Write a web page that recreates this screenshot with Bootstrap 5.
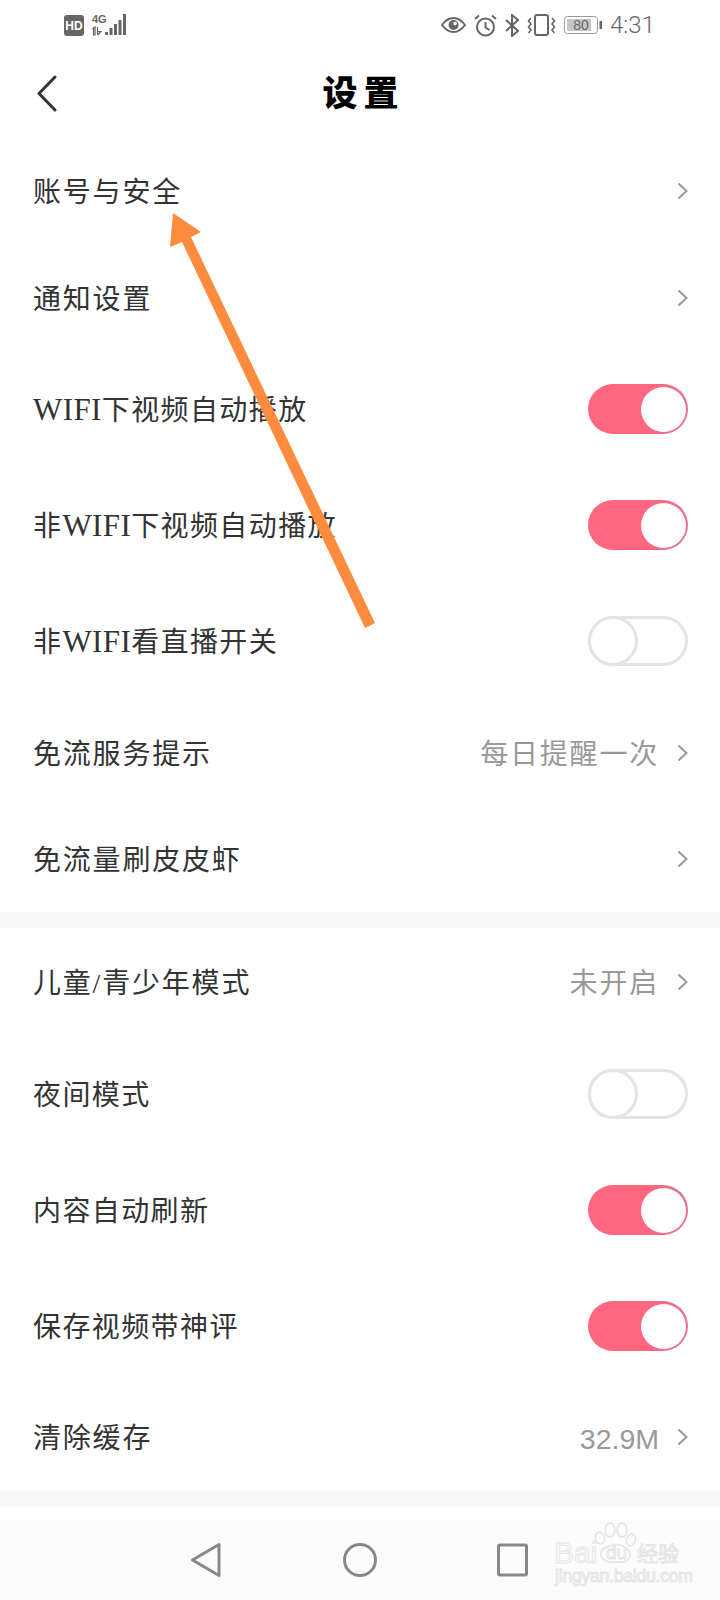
<!DOCTYPE html>
<html lang="zh-CN">
<head>
    <meta charset="UTF-8">
    <meta name="viewport" content="width=device-width, initial-scale=1.0">
    <title>设置</title>
    <link href="https://cdn.jsdelivr.net/npm/bootstrap@5.3.0/dist/css/bootstrap.min.css" rel="stylesheet">
    <style>
        body {
            width: 720px;
            height: 1600px;
            overflow: hidden;
            background: #fff;
            font-family: "Liberation Serif", "Noto Sans CJK SC", serif;
            color: #333;
        }
        .phone { position: relative; width: 720px; height: 1600px; }
        .status-bar { height: 50px; padding: 0 65px 0 64px; color: #666; }
        .status-time { font: 300 24px/1 "Roboto", sans-serif; margin-left: 8px; }
        .title-bar { height: 87px; padding-left: 36px; position: relative; }
        .page-title { position: absolute; left: 0; right: 0; top: 18px; margin: 0; padding-left: 7px; text-align: center; font: 900 35px/46px "Noto Sans CJK SC", sans-serif; letter-spacing: 6px; color: #000; }
        .set-row { height: 107px; padding: 0 32px 0 33px; font-size: 28px; letter-spacing: 1.8px; }
        .set-row > span:not(.switch-box) { padding-top: 4px; }
        .set-row.has-switch { height: 116px; letter-spacing: 1.4px; }
        .set-row.row-first { height: 108px; }
        .set-row.row-last { height: 106px; }
        .wifi-text { font-size: 31px; letter-spacing: .4px; line-height: 1; }
        .set-value { color: #999; margin-right: 18px; }
        .set-num { font-family: "Liberation Sans", sans-serif; letter-spacing: 0; font-size: 28.500px; }
        .gap-bar { height: 16px; background: #f9f9f9; }
        .switch-box { position: relative; width: 100px; height: 50px; border-radius: 25px; }
        .switch-box.on { background: linear-gradient(90deg, #ff6680 72%, #e8708a 72%); }
        .switch-box.on::after { content: ""; position: absolute; right: 2px; top: 3px; width: 45px; height: 45px; border-radius: 50%; background: #fff; }
        .switch-box.off { border: 3px solid #e4e4e6; }
        .switch-box.off::after { content: ""; position: absolute; left: -3px; top: -3px; width: 50px; height: 50px; border-radius: 50%; border: 3px solid #e4e4e6; background: #fff; }
        .nav-bottom { position: absolute; left: 0; right: 0; top: 1520px; height: 80px; background: #fcfcfc; }
        .nav-bottom svg { position: absolute; top: 22px; }
        .arrow-mark { position: absolute; left: 0; top: 0; pointer-events: none; }
        .baidu-mark { position: absolute; left: 553px; top: 1522px; width: 130px; height: 64px; font-family: "Liberation Sans", sans-serif; color: transparent; -webkit-text-stroke: 1px #e4e4e4; white-space: nowrap; }
        .baidu-bai { position: absolute; top: 14px; left: 1px; font-size: 30px; line-height: 34px; }
        .baidu-du { position: absolute; top: 20px; left: 53px; font-size: 19px; line-height: 22px; }
        .baidu-cn { position: absolute; top: 17px; left: 84px; font: 400 21px/26px "Noto Sans CJK SC", sans-serif; }
        .baidu-sub { position: absolute; top: 44px; left: 2px; font-size: 17.500px; line-height: 20px; letter-spacing: -.2px; }
        .baidu-paw { position: absolute; left: 40px; top: 0; }
    </style>
</head>
<body>
<div class="phone">
    <div class="status-bar d-flex align-items-center">
        <svg width="20" height="21" viewBox="0 0 20 21"><rect width="20" height="21" rx="3" fill="#666"/><text x="10" y="15" text-anchor="middle" font-family="Liberation Sans" font-weight="700" font-size="12" fill="#fff">HD</text></svg>
        <svg class="ms-2" width="35" height="24" viewBox="0 0 35 24" fill="#666">
            <text x="0" y="10" font-family="Liberation Sans" font-weight="700" font-size="11">4G</text>
            <path d="M1 15.500l2-1.500v8H1.500v-6zM5.500 14v8M5.500 22l3.500-3.500H5.500" stroke="#666" stroke-width="1.200" fill="none"/>
            <rect x="13" y="19" width="3" height="3"/><rect x="17.500" y="15" width="3" height="7"/><rect x="22" y="11" width="3" height="11"/><rect x="26.500" y="7" width="3" height="15"/><rect x="31" y="1" width="3" height="21"/>
        </svg>
        <div class="flex-grow-1"></div>
        <svg width="25" height="16" viewBox="0 0 25 16"><path d="M1 8C5 2.500 9 1 12.500 1S20 2.500 24 8C20 13.500 16 15 12.500 15S5 13.500 1 8Z" fill="none" stroke="#666" stroke-width="2"/><circle cx="12.500" cy="8" r="5" fill="#666"/><circle cx="14" cy="6.500" r="1.800" fill="#fff"/></svg>
        <svg class="ms-2" width="23" height="23" viewBox="0 0 23 23" fill="none" stroke="#666" stroke-width="2"><circle cx="11.500" cy="13" r="8.500"/><path d="M11.500 8v5.500l4 2.500M1 5l4-3.500M22 5l-4-3.500"/></svg>
        <svg class="ms-2" width="14" height="23" viewBox="0 0 14 23" fill="none" stroke="#666" stroke-width="2"><path d="M1 6l12 11-6 5V1l6 5L1 17"/></svg>
        <svg class="ms-2" width="29" height="22" viewBox="0 0 29 22" fill="none" stroke="#666" stroke-width="2"><rect x="8" y="1" width="13" height="20" rx="2"/><path d="M4 4L1.500 7 4 10 1.500 13 4 16 1.500 19M25 4l2.500 3L25 10l2.500 3L25 16l2.500 3" stroke-width="1.600"/></svg>
        <svg class="ms-2" width="38" height="18" viewBox="0 0 38 18"><rect x=".5" y=".5" width="33" height="17" rx="3" fill="none" stroke="#999"/><rect x="3" y="3" width="24" height="12" fill="#c6c6c6"/><text x="17" y="14" text-anchor="middle" font-family="Liberation Sans" font-size="14" fill="#666">80</text><rect x="35.500" y="5" width="2.500" height="8" fill="#666"/></svg>
        <span class="status-time">4:31</span>
    </div>

    <div class="title-bar d-flex align-items-center">
        <svg width="21" height="37" viewBox="0 0 21 37"><path d="M19 2L3 18.500 19 35" fill="none" stroke="#333" stroke-width="3" stroke-linecap="round" stroke-linejoin="round"/></svg>
        <h1 class="page-title">设置</h1>
    </div>

    <div class="set-row d-flex align-items-center justify-content-between"><span>账号与安全</span><svg width="11" height="18" viewBox="0 0 11 18"><path d="M1.500 1.500L9.500 9l-8 7.500" fill="none" stroke="#999" stroke-width="2"/></svg></div>
    <div class="set-row d-flex align-items-center justify-content-between"><span>通知设置</span><svg width="11" height="18" viewBox="0 0 11 18"><path d="M1.500 1.500L9.500 9l-8 7.500" fill="none" stroke="#999" stroke-width="2"/></svg></div>
    <div class="set-row has-switch d-flex align-items-center justify-content-between"><span><span class="wifi-text">WIFI</span>下视频自动播放</span><span class="switch-box on"></span></div>
    <div class="set-row has-switch d-flex align-items-center justify-content-between"><span>非<span class="wifi-text">WIFI</span>下视频自动播放</span><span class="switch-box on"></span></div>
    <div class="set-row has-switch d-flex align-items-center justify-content-between"><span>非<span class="wifi-text">WIFI</span>看直播开关</span><span class="switch-box off"></span></div>
    <div class="set-row d-flex align-items-center"><span class="flex-grow-1">免流服务提示</span><span class="set-value">每日提醒一次</span><svg width="11" height="18" viewBox="0 0 11 18"><path d="M1.500 1.500L9.500 9l-8 7.500" fill="none" stroke="#999" stroke-width="2"/></svg></div>
    <div class="set-row row-last d-flex align-items-center justify-content-between"><span>免流量刷皮皮虾</span><svg width="11" height="18" viewBox="0 0 11 18"><path d="M1.500 1.500L9.500 9l-8 7.500" fill="none" stroke="#999" stroke-width="2"/></svg></div>

    <div class="gap-bar"></div>

    <div class="set-row row-first d-flex align-items-center"><span class="flex-grow-1">儿童/青少年模式</span><span class="set-value">未开启</span><svg width="11" height="18" viewBox="0 0 11 18"><path d="M1.500 1.500L9.500 9l-8 7.500" fill="none" stroke="#999" stroke-width="2"/></svg></div>
    <div class="set-row has-switch d-flex align-items-center justify-content-between"><span>夜间模式</span><span class="switch-box off"></span></div>
    <div class="set-row has-switch d-flex align-items-center justify-content-between"><span>内容自动刷新</span><span class="switch-box on"></span></div>
    <div class="set-row has-switch d-flex align-items-center justify-content-between"><span>保存视频带神评</span><span class="switch-box on"></span></div>
    <div class="set-row row-last d-flex align-items-center"><span class="flex-grow-1">清除缓存</span><span class="set-value set-num">32.9M</span><svg width="11" height="18" viewBox="0 0 11 18"><path d="M1.500 1.500L9.500 9l-8 7.500" fill="none" stroke="#999" stroke-width="2"/></svg></div>

    <div class="gap-bar"></div>

    <div class="nav-bottom">
        <svg style="left:190px" width="32" height="36" viewBox="0 0 32 36"><path d="M29 2.500V33.500L2.500 18Z" fill="none" stroke="#888" stroke-width="3" stroke-linejoin="round"/></svg>
        <svg style="left:343px" width="34" height="36" viewBox="0 0 34 36"><circle cx="17" cy="18" r="15.500" fill="none" stroke="#888" stroke-width="3"/></svg>
        <svg style="left:497px" width="31" height="36" viewBox="0 0 31 36"><rect x="1.500" y="3" width="28" height="30" rx="1.500" fill="none" stroke="#888" stroke-width="3"/></svg>
    </div>

    <div class="baidu-mark">
        <svg class="baidu-paw" width="46" height="44" viewBox="0 0 46 44" fill="none" stroke="#e4e4e4" stroke-width="1.500">
            <ellipse cx="7" cy="16" rx="4.500" ry="6" transform="rotate(-15 7 16)"/><ellipse cx="17" cy="8" rx="5" ry="7"/><ellipse cx="29" cy="8" rx="5" ry="7"/><ellipse cx="38" cy="18" rx="4.500" ry="6" transform="rotate(15 38 18)"/>
            <path d="M8 32C8 26 15 24 21 23 29 22 36 26 37 33 37 39 31 41 24 40 16 41 8 39 8 32Z"/>
        </svg>
        <span class="baidu-bai">Bai</span>
        <span class="baidu-du">du</span>
        <span class="baidu-cn">经验</span>
        <span class="baidu-sub">jingyan.baidu.com</span>
    </div>

    <svg class="arrow-mark" width="720" height="1600" viewBox="0 0 720 1600"><polygon points="173,213 201,232 191,237 375,623 365,628 182,242 170,247" fill="#ff8c3e"/></svg>
</div>
<script src="https://cdn.jsdelivr.net/npm/bootstrap@5.3.0/dist/js/bootstrap.bundle.min.js"></script>
</body>
</html>
